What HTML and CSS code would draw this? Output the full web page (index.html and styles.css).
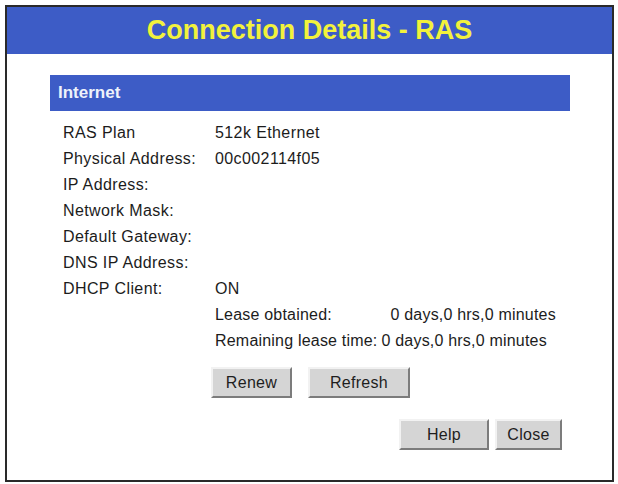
FILE: index.html
```html
<!DOCTYPE html>
<html lang="en">
<head>
    <meta charset="UTF-8">
    <title>Connection Details - RAS</title>
    <link rel="stylesheet" href="styles.css">
</head>
<body>
    <div class="window">
        <div class="window-header">
            <h1 class="window-title">Connection Details - RAS</h1>
        </div>
        <div class="window-body">
            <div class="section-bar">Internet</div>
            <div class="info">
                <div class="info-label">RAS Plan</div>
                <div class="info-value">512k Ethernet</div>
                <div class="info-label">Physical Address:</div>
                <div class="info-value">00c002114f05</div>
                <div class="info-label">IP Address:</div>
                <div class="info-value"></div>
                <div class="info-label">Network Mask:</div>
                <div class="info-value"></div>
                <div class="info-label">Default Gateway:</div>
                <div class="info-value"></div>
                <div class="info-label">DNS IP Address:</div>
                <div class="info-value"></div>
                <div class="info-label">DHCP Client:</div>
                <div class="info-value">ON</div>
                <div class="lease">
                    <div>Lease obtained:</div>
                    <div class="lease-value">0 days,0 hrs,0 minutes</div>
                    <div>Remaining lease time:</div>
                    <div>0 days,0 hrs,0 minutes</div>
                </div>
            </div>
            <div class="dhcp-actions">
                <button class="btn btn-renew" type="button">Renew</button>
                <button class="btn btn-refresh" type="button">Refresh</button>
            </div>
            <div class="window-actions">
                <button class="btn btn-help" type="button">Help</button>
                <button class="btn btn-close" type="button">Close</button>
            </div>
        </div>
    </div>
</body>
</html>
```

FILE: styles.css
```css
/* page */
body {
    margin: 0;
    padding: 0;
    background: #fff;
    font-family: "Liberation Sans", Arial, sans-serif;
    color: #1c1c1c;
}

/* outer window frame */
.window {
    box-sizing: border-box;
    width: 609px;
    height: 477px;
    margin: 5px 0 0 5px;
    border: 2px solid #2a2a2a;
    background: #fff;
}

.window-header {
    height: 47px;
    background: #3d5cc6;
    display: flex;
    justify-content: center;
    align-items: center;
}
.window-title {
    margin: 0;
    font-size: 27px;
    font-weight: bold;
    color: #f2f23c;
    line-height: 47px;
}

.window-body {
    padding: 21px 42px 0 43px;
}

/* blue section heading */
.section-bar {
    height: 36px;
    line-height: 36px;
    padding-left: 8px;
    background: #3d5cc6;
    color: #eef2fb;
    font-size: 17px;
    font-weight: bold;
}

/* label / value table */
.info {
    display: grid;
    grid-template-columns: 152px 1fr;
    grid-auto-rows: 26px;
    margin-top: 9px;
    padding-left: 13px;
    font-size: 16px;
    line-height: 26px;
    letter-spacing: 0.4px;
    white-space: nowrap;
}
.lease {
    grid-column: 2;
    grid-row: span 2;
    display: grid;
    grid-template-columns: max-content 1fr;
    grid-auto-rows: 26px;
    column-gap: 4px;
    letter-spacing: 0.2px;
}
.lease-value {
    padding-left: 9px;
}

/* buttons */
.btn {
    box-sizing: border-box;
    height: 31px;
    padding: 0;
    background: #d5d5d5;
    border: 2px solid;
    border-color: #f2f2f2 #7c7c7c #7c7c7c #f2f2f2;
    border-radius: 0;
    font-family: inherit;
    font-size: 16px;
    letter-spacing: 0.3px;
    color: #1e1e1e;
    cursor: pointer;
}
.dhcp-actions {
    display: flex;
    gap: 16px;
    margin-top: 13px;
    padding-left: 161px;
}
.btn-renew { width: 81px; }
.btn-refresh { width: 102px; }

.window-actions {
    display: flex;
    justify-content: flex-end;
    gap: 6px;
    margin-top: 21px;
    padding-right: 8px;
}
.btn-help { width: 90px; }
.btn-close { width: 67px; }
```
